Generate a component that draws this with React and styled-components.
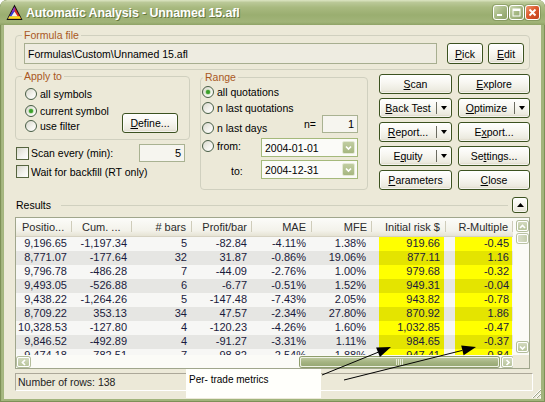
import React from 'react';
import styled, { createGlobalStyle } from 'styled-components';

const UI = `"Liberation Sans", Arial, sans-serif`;

const Global = createGlobalStyle`
  html, body { margin: 0; padding: 0; background: #ffffff; }
  body { width: 545px; height: 402px; overflow: hidden; }
  * { box-sizing: border-box; }
`;

const Window = styled.div`
  position: relative;
  width: 545px;
  height: 402px;
  display: flex;
  flex-direction: column;
  background: linear-gradient(to right, #8A9E62 0px, #A9BA84 2px, #A2B47C 4px);
  border-radius: 7px 7px 0 0;
  box-shadow: inset 0 0 0 1px #7D9057;
  overflow: hidden;
  font-family: ${UI};
  font-size: 10.5px;
  color: #000;
`;

const TitleBar = styled.div`
  flex: none;
  height: 25px;
  display: flex;
  align-items: center;
  padding: 0 5px 0 6px;
  border-radius: 7px 7px 0 0;
  background: linear-gradient(to bottom, #DDE5C3 0%, #BAC897 10%, #A8B97F 30%, #9AAE70 60%, #A2B479 88%, #8FA366 100%);
`;

const TitleText = styled.div`
  flex: 1;
  margin-left: 3px;
  color: #fff;
  font-weight: bold;
  font-size: 12.4px;
  letter-spacing: -0.1px;
  text-shadow: 1px 1px 0 #66773F;
`;

const Controls = styled.div`
  display: flex;
  gap: 1px;
`;

const CtrlBtn = styled.span`
  width: 15px;
  height: 15px;
  border: 1px solid #fff;
  border-radius: 3px;
  display: flex;
  align-items: center;
  justify-content: center;
  background: ${p => (p.$close
    ? 'linear-gradient(135deg, #EE9A72 0%, #DC5A2E 45%, #C2401C 100%)'
    : 'linear-gradient(135deg, #CAD6AE 0%, #A6B884 50%, #8DA167 100%)')};
  box-shadow: 0 0 0 1px rgba(90, 110, 55, 0.35);
`;

const Body = styled.div`
  flex: 1;
  margin: 0 4px 3px;
  background: #ECE9D8;
  display: flex;
  flex-direction: column;
  padding: 4px 11px 0;
`;

const Group = styled.fieldset`
  margin: ${p => p.$mt || 0}px 0 0;
  padding: 0;
  min-width: 0;
  border: 1px solid #D0D0BF;
  border-radius: 4px;
`;

const Legend = styled.legend`
  margin-left: ${p => p.$ml}px;
  padding: 0 2px;
  line-height: 12px;
  color: #A9581F;
`;

const FormulaRow = styled.div`
  display: flex;
  align-items: center;
  gap: 5px;
  padding: 2px 5px 5px 8px;
`;

const PathField = styled.div`
  flex: 1;
  height: 21px;
  margin-right: 5px;
  border: 1px solid #A7AE90;
  background: #EEECE1;
  padding-left: 3px;
  display: flex;
  align-items: center;
`;

const Btn = styled.button`
  flex: none;
  width: ${p => p.$w ? `${p.$w}px` : 'auto'};
  height: ${p => p.$h || 20}px;
  align-self: ${p => p.$self || 'auto'};
  padding: 0;
  border: 1px solid #3C5220;
  border-radius: 3px;
  background: linear-gradient(to bottom, #FFFFFF 0%, #F7F6F0 45%, #ECEADF 85%, #D9D4C2 100%);
  box-shadow: inset 0 0 0 1px rgba(255, 255, 255, 0.7);
  font-family: ${UI};
  font-size: 10.5px;
  color: #000;
  display: flex;
  align-items: center;
  justify-content: center;
  u { text-decoration: underline; text-underline-offset: 1px; }
`;

const SplitMain = styled.span`
  flex: 1;
  text-align: center;
`;

const SplitArrow = styled.span`
  width: 15px;
  align-self: stretch;
  margin: 3px 0;
  border-left: 1px solid #6B6B60;
  display: flex;
  align-items: center;
  justify-content: center;
  &::after {
    content: '';
    border-left: 3px solid transparent;
    border-right: 3px solid transparent;
    border-top: 4px solid #000;
  }
`;

const Middle = styled.div`
  display: grid;
  grid-template-columns: 175px 168px 151px;
  column-gap: 10px;
  align-items: start;
`;

const LeftCol = styled.div`
  display: flex;
  flex-direction: column;
`;

const ApplyContent = styled.div`
  display: flex;
  padding: 4px 11px 6px 9px;
`;

const RadioList = styled.div`
  flex: 1;
  display: flex;
  flex-direction: column;
`;

const RadioItem = styled.label`
  height: 15px;
  display: flex;
  align-items: center;
  gap: 3px;
  margin-top: ${p => p.$mt || 0}px;
  margin-bottom: ${p => p.$mb || 0}px;
  align-self: ${p => p.$self || 'auto'};
  white-space: nowrap;
`;

const RadioCircle = styled.span`
  flex: none;
  width: 12px;
  height: 12px;
  border-radius: 50%;
  border: 1px solid #475D45;
  background: linear-gradient(135deg, #D8D7CC 0%, #F4F4EF 60%, #FFFFFF 100%);
  display: flex;
  align-items: center;
  justify-content: center;
  &::after {
    content: '';
    display: ${p => (p.$on ? 'block' : 'none')};
    width: 4px;
    height: 4px;
    border-radius: 50%;
    background: #3A9F2A;
    box-shadow: 0 0 1px 0.5px #8BCB78;
  }
`;

const CheckRow = styled.div`
  display: flex;
  align-items: center;
  justify-content: space-between;
  height: ${p => p.$h}px;
  margin-top: ${p => p.$mt}px;
  padding: 0 5px 0 1px;
`;

const CheckLabel = styled.label`
  display: flex;
  align-items: center;
  gap: 2px;
  white-space: nowrap;
`;

const CheckBox = styled.span`
  flex: none;
  width: 13px;
  height: 13px;
  border: 1px solid #56653F;
  background: linear-gradient(135deg, #D9D8CD 0%, #F3F3EE 60%, #FFFFFF 100%);
`;

const NumField = styled.div`
  width: ${p => p.$w}px;
  height: 18px;
  border: 1px solid #A9B292;
  background: #F6F5EF;
  display: flex;
  align-items: center;
  justify-content: flex-end;
  padding-right: 3px;
  font-size: 11px;
`;

const RangeContent = styled.div`
  display: flex;
  flex-direction: column;
  padding: 1px 9px 10px 1px;
`;

const RangeRow = styled.div`
  display: flex;
  justify-content: space-between;
  align-items: ${p => p.$align || 'center'};
  height: ${p => p.$h || 15}px;
  margin-top: ${p => p.$mt || 0}px;
`;

const NGroup = styled.div`
  display: flex;
  align-items: center;
  gap: 6px;
`;

const ToLabel = styled.span`
  margin-left: 29px;
  line-height: 15px;
`;

const Combo = styled.div`
  width: 97px;
  height: 19px;
  border: 1px solid #A5B97B;
  background: #FBFBF8;
  display: flex;
  align-items: center;
  justify-content: space-between;
  padding: 0 2px 0 3px;
`;

const DropBtn = styled.span`
  width: 13px;
  height: 13px;
  border-radius: 2px;
  border: 1px solid #E4EAD4;
  background: linear-gradient(to bottom, #C1CDA2 0%, #A6B780 100%);
  display: flex;
  align-items: center;
  justify-content: center;
`;

const ButtonGrid = styled.div`
  margin-top: 4px;
  margin-left: 1px;
  display: grid;
  grid-template-columns: 73px 72px;
  grid-auto-rows: 20px;
  column-gap: 6px;
  row-gap: 4px;
  > button { width: 100%; }
`;

const ResultsBar = styled.div`
  margin-top: 7px;
  height: 16px;
  display: flex;
  align-items: center;
  padding: 0 2px 0 1px;
`;

const RuleLine = styled.div`
  flex: 1;
  height: 1px;
  margin: 0 4px 0 10px;
  background: #D0D0BF;
`;

const ListView = styled.div`
  margin-top: 4px;
  border: 1px solid #A0A68C;
  display: grid;
  grid-template-columns: 497px 16px;
  grid-template-rows: 137px 13px;
  background: #F7F7F5;
`;

const Viewport = styled.div`
  overflow: hidden;
  font-size: 11px;
`;

const GRID = '56px 60px 60px 60px 60px 60px 74px 67px';

const HeaderRow = styled.div`
  display: grid;
  grid-template-columns: ${GRID};
  height: 19px;
  background: linear-gradient(to bottom, #FCFCF9 0%, #F3F2EA 70%, #E6E3D4 100%);
  border-bottom: 1px solid #D6D2C2;
  color: #2B2B2B;
`;

const HeadCell = styled.div`
  position: relative;
  line-height: 18px;
  white-space: nowrap;
  overflow: hidden;
  text-align: ${p => p.$left ? 'left' : 'right'};
  padding: ${p => p.$left ? `0 0 0 ${p.$pl}px` : `0 ${p.$pr}px 0 0`};
  &::after {
    content: '';
    position: absolute;
    right: 0;
    top: 3px;
    bottom: 4px;
    width: 1px;
    background: #CFCCBA;
    box-shadow: 1px 0 0 #fff;
  }
`;

const DataRow = styled.div`
  display: grid;
  grid-template-columns: ${GRID};
  height: 14px;
  background: ${p => (p.$alt ? '#E6E6E3' : '#F7F7F5')};
  color: #1A1A3C;
`;

const Cell = styled.div`
  text-align: right;
  line-height: 13px;
  padding-right: ${p => p.$pr || 5}px;
  white-space: nowrap;
  overflow: hidden;
`;

const HiCell = styled(Cell)`
  margin: 0 ${p => p.$mr}px 0 ${p => p.$ml}px;
  background: ${p => (p.$alt ? '#E4E400' : '#FFFF00')};
`;

const VScroll = styled.div`
  display: flex;
  flex-direction: column;
  align-items: flex-start;
  padding: 3px 0 3px 4px;
  background: #FBFBF7;
`;

const ScrollBtn = styled.span`
  flex: none;
  width: ${p => p.$w || 11}px;
  height: 10px;
  margin-top: ${p => p.$mt || 0}px;
  margin-left: ${p => p.$ml || 0}px;
  border-radius: 2px;
  border: 1px solid #fff;
  box-shadow: 0 0 0 1px #B3BD9B;
  background: linear-gradient(to bottom, #D3DABE 0%, #B8C49C 100%);
  display: flex;
  align-items: center;
  justify-content: center;
`;

const VThumb = styled.span`
  width: 11px;
  height: 9px;
  margin-top: 3px;
  border-radius: 2px;
  border: 1px solid #fff;
  box-shadow: 0 0 0 1px #B9C2A3;
  background: linear-gradient(to right, #D9DEC9, #C6CEAE);
`;

const HScroll = styled.div`
  display: flex;
  align-items: center;
  background: #FBFBF7;
  padding: 1px 0 0 1px;
`;

const HThumb = styled.span`
  width: 200px;
  height: 10px;
  margin-left: 270px;
  margin-right: 3px;
  border-radius: 2px;
  border: 1px solid #EEF1E4;
  box-shadow: 0 0 0 1px #8E9D6C;
  background: linear-gradient(to bottom, #BCC79E 0%, #A5B482 50%, #97A874 100%);
  display: flex;
  align-items: center;
  justify-content: center;
  gap: 1px;
  > i {
    width: 1px;
    height: 6px;
    background: #E4EAD3;
  }
`;

const Corner = styled.div`
  background: #ECE9D8;
`;

const StatusBar = styled.div`
  margin: 4px -3px 0 0;
  height: 18px;
  border: 1px solid;
  border-color: #ACA899 #FFFFFF #FFFFFF #ACA899;
  padding-left: 2px;
  display: flex;
  align-items: center;
  color: #222;
`;

const Note = styled.div`
  position: absolute;
  left: 186px;
  top: 369px;
  width: 135px;
  height: 29px;
  background: #FFFFFB;
  font-size: 10px;
  line-height: 12px;
  padding: 5px 0 0 3px;
  color: #000;
`;

const Overlay = styled.svg`
  position: absolute;
  left: 0;
  top: 0;
  pointer-events: none;
`;

const Grip = styled.svg`
  position: absolute;
  right: 3px;
  bottom: 3px;
`;

const Chevron = ({ dir, color = '#fff' }) => {
  const pts = {
    up: '2,6 4.5,3.5 7,6',
    down: '2,3.5 4.5,6 7,3.5',
    left: '6,2 3.5,4.5 6,7',
    right: '3.5,2 6,4.5 3.5,7',
  }[dir];
  return (
    <svg width="9" height="9" viewBox="0 0 9 9">
      <polyline points={pts} fill="none" stroke={color} strokeWidth="1.7" />
    </svg>
  );
};

const AppIcon = () => (
  <svg width="17" height="17" viewBox="0 0 17 17">
    <polygon points="8.5,0.5 16.5,16 0.5,16" fill="#111" />
    <polygon points="8.5,2.8 15,14.8 2,14.8" fill="#D92A22" />
    <polygon points="8.5,2.8 2,14.8 5.2,14.8 8.5,8.2" fill="#2F3FD8" />
    <polygon points="8.5,2.8 5.6,8.2 8.5,6.8" fill="#9B2FC8" />
    <polygon points="2,14.8 15,14.8 13.6,12.2 3.4,12.2" fill="#F7E31C" />
    <polygon points="8.5,7.6 11.6,12.2 5.4,12.2" fill="#F4F4EC" />
  </svg>
);

const Radio = ({ on, children, ...rest }) => (
  <RadioItem {...rest}>
    <RadioCircle $on={on} />
    <span>{children}</span>
  </RadioItem>
);

const Check = ({ children }) => (
  <CheckLabel>
    <CheckBox />
    <span>{children}</span>
  </CheckLabel>
);

const Split = ({ children }) => (
  <Btn>
    <SplitMain>{children}</SplitMain>
    <SplitArrow />
  </Btn>
);

const headers = [
  { t: 'Positio...', left: true, pl: 6 },
  { t: 'Cum. ...', left: true, pl: 10 },
  { t: '# bars', pr: 6 },
  { t: 'Profit/bar', pr: 5 },
  { t: 'MAE', pr: 6 },
  { t: 'MFE', pr: 5 },
  { t: 'Initial risk $', pr: 6 },
  { t: 'R-Multiple', pr: 5 },
];

const rows = [
  ['9,196.65', '-1,197.34', '5', '-82.84', '-4.11%', '1.38%', '919.66', '-0.45'],
  ['8,771.07', '-177.64', '32', '31.87', '-0.86%', '19.06%', '877.11', '1.16'],
  ['9,796.78', '-486.28', '7', '-44.09', '-2.76%', '1.00%', '979.68', '-0.32'],
  ['9,493.05', '-526.88', '6', '-6.77', '-0.51%', '1.52%', '949.31', '-0.04'],
  ['9,438.22', '-1,264.26', '5', '-147.48', '-7.43%', '2.05%', '943.82', '-0.78'],
  ['8,709.22', '353.13', '34', '47.57', '-2.34%', '27.80%', '870.92', '1.86'],
  ['10,328.53', '-127.80', '4', '-120.23', '-4.26%', '1.60%', '1,032.85', '-0.47'],
  ['9,846.52', '-492.89', '4', '-91.27', '-3.31%', '1.11%', '984.65', '-0.37'],
  ['9,474.18', '-782.51', '7', '-98.82', '-2.54%', '1.88%', '947.41', '-0.84'],
];

export default function App() {
  return (
    <>
      <Global />
      <Window>
        <TitleBar>
          <AppIcon />
          <TitleText>Automatic Analysis - Unnamed 15.afl</TitleText>
          <Controls>
            <CtrlBtn>
              <svg width="13" height="13" viewBox="0 0 13 13">
                <rect x="3" y="8" width="5" height="2" fill="#fff" />
              </svg>
            </CtrlBtn>
            <CtrlBtn>
              <svg width="13" height="13" viewBox="0 0 13 13">
                <rect x="3" y="3" width="7" height="7" fill="none" stroke="#fff" strokeWidth="1" />
                <rect x="3" y="3" width="7" height="2" fill="#fff" />
              </svg>
            </CtrlBtn>
            <CtrlBtn $close>
              <svg width="13" height="13" viewBox="0 0 13 13">
                <path d="M3.5 3.5 L9.5 9.5 M9.5 3.5 L3.5 9.5" stroke="#fff" strokeWidth="1.9" />
              </svg>
            </CtrlBtn>
          </Controls>
        </TitleBar>

        <Body>
          <Group>
            <Legend $ml={6}>Formula file</Legend>
            <FormulaRow>
              <PathField>{'Formulas\\Custom\\Unnamed 15.afl'}</PathField>
              <Btn $w={36} $h={21}><u>P</u>ick</Btn>
              <Btn $w={36} $h={21}><u>E</u>dit</Btn>
            </FormulaRow>
          </Group>

          <Middle>
            <LeftCol>
              <Group>
                <Legend $ml={6}>Apply to</Legend>
                <ApplyContent>
                  <RadioList>
                    <Radio $mb={2}>all symbols</Radio>
                    <Radio on>current symbol</Radio>
                    <Radio>use filter</Radio>
                  </RadioList>
                  <Btn $w={56} $self="flex-end"><u>D</u>efine...</Btn>
                </ApplyContent>
              </Group>
              <CheckRow $h={18} $mt={4}>
                <Check>Scan every (min):</Check>
                <NumField $w={46}>5</NumField>
              </CheckRow>
              <CheckRow $h={13} $mt={3}>
                <Check>Wait for backfill (RT only)</Check>
              </CheckRow>
            </LeftCol>

            <Group $mt={1}>
              <Legend $ml={2}>Range</Legend>
              <RangeContent>
                <RangeRow>
                  <Radio on>all quotations</Radio>
                </RangeRow>
                <RangeRow $mt={1}>
                  <Radio>n last quotations</Radio>
                </RangeRow>
                <RangeRow $h={18} $align="flex-end">
                  <Radio $mb={-2}>n last days</Radio>
                  <NGroup>
                    <span>n=</span>
                    <NumField $w={36}>1</NumField>
                  </NGroup>
                </RangeRow>
                <RangeRow $h={19} $mt={5} $align="flex-start">
                  <Radio>from:</Radio>
                  <Combo>
                    <span>2004-01-01</span>
                    <DropBtn><Chevron dir="down" /></DropBtn>
                  </Combo>
                </RangeRow>
                <RangeRow $h={19} $mt={3} $align="flex-end">
                  <ToLabel>to:</ToLabel>
                  <Combo>
                    <span>2004-12-31</span>
                    <DropBtn><Chevron dir="down" /></DropBtn>
                  </Combo>
                </RangeRow>
              </RangeContent>
            </Group>

            <ButtonGrid>
              <Btn><u>S</u>can</Btn>
              <Btn><u>E</u>xplore</Btn>
              <Split><u>B</u>ack Test</Split>
              <Split><u>O</u>ptimize</Split>
              <Split><u>R</u>eport...</Split>
              <Btn>E<u>x</u>port...</Btn>
              <Split>E<u>q</u>uity</Split>
              <Btn>Se<u>t</u>tings...</Btn>
              <Btn><u>P</u>arameters</Btn>
              <Btn><u>C</u>lose</Btn>
            </ButtonGrid>
          </Middle>

          <ResultsBar>
            <span>Results</span>
            <RuleLine />
            <Btn $w={16} $h={16}>
              <svg width="7" height="4" viewBox="0 0 7 4">
                <polygon points="0,4 3.5,0 7,4" fill="#000" />
              </svg>
            </Btn>
          </ResultsBar>

          <ListView>
            <Viewport>
              <HeaderRow>
                {headers.map(h => (
                  <HeadCell key={h.t} $left={h.left} $pl={h.pl} $pr={h.pr}>{h.t}</HeadCell>
                ))}
              </HeaderRow>
              {rows.map((r, i) => (
                <DataRow key={i} $alt={i % 2 === 1}>
                  {r.slice(0, 6).map((v, j) => (
                    <Cell key={j} $pr={j >= 4 ? 6 : 5}>{v}</Cell>
                  ))}
                  <HiCell $alt={i % 2 === 1} $ml={7} $mr={2} $pr={4}>{r[6]}</HiCell>
                  <HiCell $alt={i % 2 === 1} $ml={9} $mr={1} $pr={3}>{r[7]}</HiCell>
                </DataRow>
              ))}
            </Viewport>
            <VScroll>
              <ScrollBtn><Chevron dir="up" /></ScrollBtn>
              <VThumb />
              <ScrollBtn style={{ marginTop: 'auto' }}><Chevron dir="down" /></ScrollBtn>
            </VScroll>
            <HScroll>
              <ScrollBtn $w={13}><Chevron dir="left" /></ScrollBtn>
              <HThumb><i /><i /><i /><i /></HThumb>
              <ScrollBtn $w={11}><Chevron dir="right" /></ScrollBtn>
            </HScroll>
            <Corner />
          </ListView>

          <StatusBar>Number of rows: 138</StatusBar>
        </Body>

        <Note>Per- trade metrics</Note>

        <Overlay width="545" height="402" viewBox="0 0 545 402">
          <line x1="322" y1="375" x2="378" y2="352.3" stroke="#000" strokeWidth="1" />
          <polygon points="391,347 379.9,356.9 376.1,347.6" fill="#000" />
          <line x1="344" y1="380" x2="462.4" y2="350.4" stroke="#000" strokeWidth="1" />
          <polygon points="476,347 463.6,355.3 461.2,345.6" fill="#000" />
        </Overlay>

        <Grip width="11" height="11" viewBox="0 0 11 11">
          <path d="M10 1 L1 10 M10 5 L5 10 M10 9 L9 10" stroke="#fff" strokeWidth="1" />
          <path d="M10 2 L2 10 M10 6 L6 10" stroke="#9DA58A" strokeWidth="1" />
        </Grip>
      </Window>
    </>
  );
}
